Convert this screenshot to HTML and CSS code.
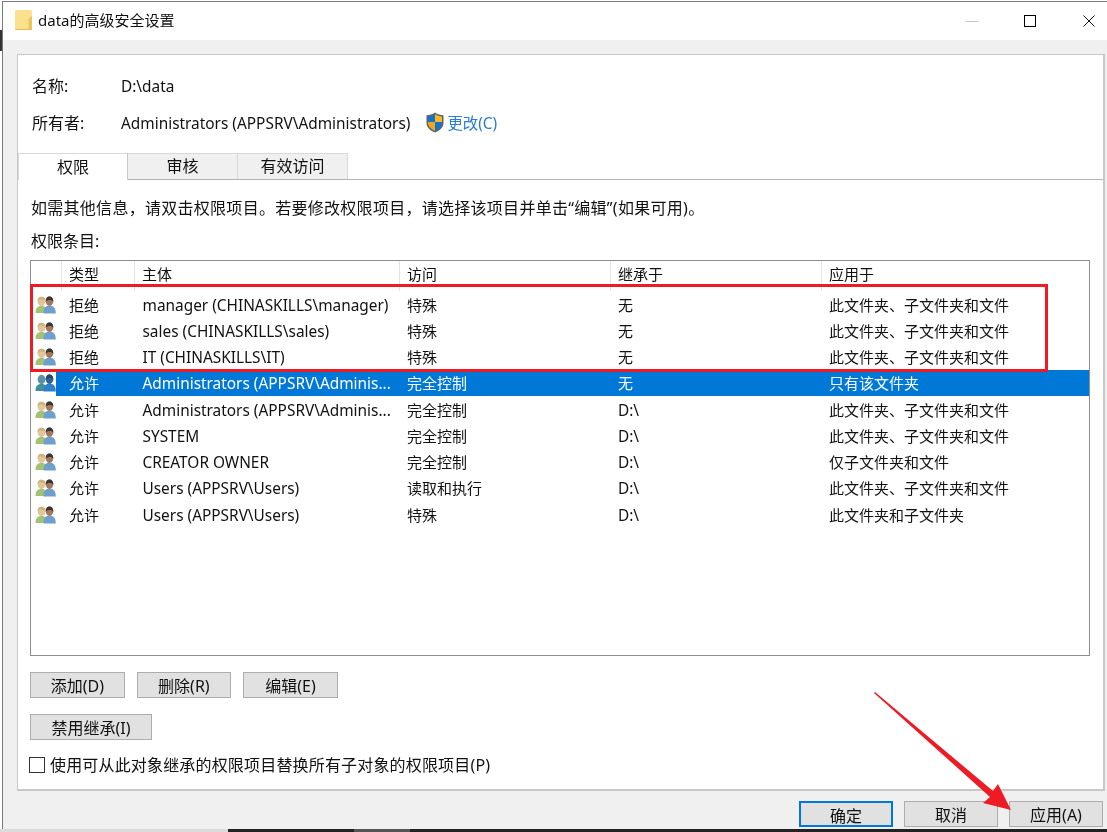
FILE: index.html
```html
<!DOCTYPE html>
<html lang="zh-CN">
<head>
<meta charset="utf-8">
<title>data的高级安全设置</title>
<link rel="stylesheet" href="styles.css">
</head>
<body>
<svg class="defs" width="0" height="0" aria-hidden="true">
  <symbol id="users" viewBox="0 0 21 18">
    <path d="M0.5 17 C0.5 11.5 3 10 6.5 10 C10 10 12 11.5 12 17 Z" fill="#a3c273"/>
    <ellipse cx="6.5" cy="5.5" rx="3.9" ry="4.7" fill="#e0c79a"/>
    <path d="M2.6 5 C2.6 1.8 4.4 .8 6.5 .8 C8.6 .8 10.4 1.8 10.4 4 C8 4.2 5.4 3.4 4.8 3 C4.4 4 3.4 4.8 2.6 5 Z" fill="#cdb27a"/>
    <path d="M8.5 17.5 C8.5 11.5 11 9.5 14.5 9.5 C18 9.5 20.8 11.5 20.8 17.5 Z" fill="#6f9fcc"/>
    <ellipse cx="14.5" cy="5.2" rx="3.8" ry="4.7" fill="#a5785a"/>
    <path d="M10.7 5.5 C10.7 1.6 12.5 .4 14.5 .4 C16.7 .4 18.3 1.8 18.3 5.5 C16.9 3.6 12.9 3.2 10.7 5.5 Z" fill="#37373b"/>
  </symbol>
  <symbol id="users-sel" viewBox="0 0 21 18">
    <path d="M0.5 17 C0.5 11.5 3 10 6.5 10 C10 10 12 11.5 12 17 Z" fill="#3f8f9f"/>
    <ellipse cx="6.5" cy="5.5" rx="3.9" ry="4.7" fill="#5a93a8"/>
    <path d="M8.5 17.5 C8.5 11.5 11 9.5 14.5 9.5 C18 9.5 20.8 11.5 20.8 17.5 Z" fill="#2f7fca"/>
    <ellipse cx="14.5" cy="5.2" rx="3.8" ry="4.7" fill="#2f6390"/>
    <path d="M10.7 5.5 C10.7 1.6 12.5 .4 14.5 .4 C16.7 .4 18.3 1.8 18.3 5.5 C16.9 3.6 12.9 3.2 10.7 5.5 Z" fill="#24466a"/>
  </symbol>
</svg>

<div class="screen">
  <div class="window">
    <header class="titlebar">
      <div class="title">
        <svg class="folder" viewBox="0 0 17 20" width="17" height="20" aria-hidden="true">
          <path d="M0 1.5 Q0 0 1.5 0 H15.5 Q17 0 17 1.5 V20 H1.5 Q0 20 0 18.5 Z" fill="#fbe08e"/>
          <path d="M13.5 20 V9 L17 6 V20 Z" fill="#eec660"/>
          <path d="M0 18.5 Q0 20 1.5 20 H17 V19 H0 Z" fill="#e6bd5a"/>
        </svg>
        <span>data的高级安全设置</span>
      </div>
      <div class="controls">
        <svg viewBox="0 0 12 12" width="12" height="12" class="ctl ctl-min" aria-hidden="true"><path d="M0 6.5H12" stroke="#c4c4c4" fill="none"/></svg>
        <svg viewBox="0 0 12 12" width="12" height="12" class="ctl ctl-max" aria-hidden="true"><rect x=".5" y=".5" width="11" height="11" stroke="#000" fill="none"/></svg>
        <svg viewBox="0 0 12 12" width="12" height="12" class="ctl" aria-hidden="true"><path d="M.5 .5L11.5 11.5M11.5 .5L.5 11.5" stroke="#111" fill="none"/></svg>
      </div>
    </header>

    <div class="body">
      <main class="panel">
        <div class="info">
          <div class="info-row"><span class="info-label">名称:</span><span class="lat">D:\data</span></div>
          <div class="info-row">
            <span class="info-label">所有者:</span>
            <span class="lat">Administrators (APPSRV\Administrators)</span>
            <svg class="shield" viewBox="0 0 18 21" width="18" height="21" aria-hidden="true">
              <path d="M9 .5 C11.5 2.4 14.5 3.2 17.5 3.2 V11 C17.5 15.5 13.5 18.8 9 20.5 C4.5 18.8 .5 15.5 .5 11 V3.2 C3.5 3.2 6.5 2.4 9 .5 Z" fill="#5b6670"/>
              <path d="M9 2 V10 H2 V4.4 C4.6 4.2 7 3.4 9 2 Z" fill="#1673c9"/>
              <path d="M9 2 C11 3.4 13.4 4.2 16 4.4 V10 H9 Z" fill="#f6b91f"/>
              <path d="M2 10 H9 V18.8 C5.2 17.2 2 14.6 2 11 Z" fill="#f0a818"/>
              <path d="M9 10 H16 V11 C16 14.6 12.8 17.2 9 18.8 Z" fill="#1673c9"/>
            </svg>
            <a class="link">更改(C)</a>
          </div>
        </div>

        <nav class="tabs">
          <span class="tab tab-active">权限</span>
          <span class="tab">审核</span>
          <span class="tab">有效访问</span>
        </nav>

        <section class="tab-body">
          <p class="hint">如需其他信息，请双击权限项目。若要修改权限项目，请选择该项目并单击“编辑”(如果可用)。</p>
          <p class="list-title">权限条目:</p>

          <div class="list">
            <div class="row head">
              <span class="cell c-ico"></span><span class="cell">类型</span><span class="cell">主体</span><span class="cell">访问</span><span class="cell">继承于</span><span class="cell">应用于</span>
            </div>
            <div class="row"><span class="cell c-ico"><svg class="u"><use href="#users"/></svg></span><span class="cell">拒绝</span><span class="cell lat">manager (CHINASKILLS\manager)</span><span class="cell">特殊</span><span class="cell">无</span><span class="cell">此文件夹、子文件夹和文件</span></div>
            <div class="row"><span class="cell c-ico"><svg class="u"><use href="#users"/></svg></span><span class="cell">拒绝</span><span class="cell lat">sales (CHINASKILLS\sales)</span><span class="cell">特殊</span><span class="cell">无</span><span class="cell">此文件夹、子文件夹和文件</span></div>
            <div class="row"><span class="cell c-ico"><svg class="u"><use href="#users"/></svg></span><span class="cell">拒绝</span><span class="cell lat">IT (CHINASKILLS\IT)</span><span class="cell">特殊</span><span class="cell">无</span><span class="cell">此文件夹、子文件夹和文件</span></div>
            <div class="row selected"><span class="cell c-ico"><svg class="u"><use href="#users-sel"/></svg></span><span class="cell">允许</span><span class="cell lat">Administrators (APPSRV\Adminis...</span><span class="cell">完全控制</span><span class="cell">无</span><span class="cell">只有该文件夹</span></div>
            <div class="row"><span class="cell c-ico"><svg class="u"><use href="#users"/></svg></span><span class="cell">允许</span><span class="cell lat">Administrators (APPSRV\Adminis...</span><span class="cell">完全控制</span><span class="cell lat">D:\</span><span class="cell">此文件夹、子文件夹和文件</span></div>
            <div class="row"><span class="cell c-ico"><svg class="u"><use href="#users"/></svg></span><span class="cell">允许</span><span class="cell lat">SYSTEM</span><span class="cell">完全控制</span><span class="cell lat">D:\</span><span class="cell">此文件夹、子文件夹和文件</span></div>
            <div class="row"><span class="cell c-ico"><svg class="u"><use href="#users"/></svg></span><span class="cell">允许</span><span class="cell lat">CREATOR OWNER</span><span class="cell">完全控制</span><span class="cell lat">D:\</span><span class="cell">仅子文件夹和文件</span></div>
            <div class="row"><span class="cell c-ico"><svg class="u"><use href="#users"/></svg></span><span class="cell">允许</span><span class="cell lat">Users (APPSRV\Users)</span><span class="cell">读取和执行</span><span class="cell lat">D:\</span><span class="cell">此文件夹、子文件夹和文件</span></div>
            <div class="row"><span class="cell c-ico"><svg class="u"><use href="#users"/></svg></span><span class="cell">允许</span><span class="cell lat">Users (APPSRV\Users)</span><span class="cell">特殊</span><span class="cell lat">D:\</span><span class="cell">此文件夹和子文件夹</span></div>
          </div>

          <div class="btn-row">
            <button class="btn">添加(D)</button>
            <button class="btn">删除(R)</button>
            <button class="btn">编辑(E)</button>
          </div>
          <div class="btn-row-2"><button class="btn btn-wide">禁用继承(I)</button></div>
          <label class="check"><span class="box"></span><span class="check-text">使用可从此对象继承的权限项目替换所有子对象的权限项目(P)</span></label>
        </section>
      </main>

      <footer class="actions">
        <button class="btn btn-main btn-default">确定</button>
        <button class="btn btn-main">取消</button>
        <button class="btn btn-main">应用(A)</button>
      </footer>
    </div>
  </div>
  <div class="taskbar">
    <span class="tb-light"></span><span class="tb-dark"></span><span class="tb-mid"></span><span class="tb-dark tb-rest"></span>
  </div>

  <span class="edge-chunk"></span>
  <span class="highlight"></span>
  <svg class="arrow" viewBox="0 0 1107 832" width="1107" height="832" aria-hidden="true">
    <polygon points="875,692 993,791 998,784 1011,810 983,803 990,797 874,693" fill="#ed1c24"/>
  </svg>
</div>
</body>
</html>
```
FILE: styles.css
```css
* { box-sizing: border-box; }
html, body { margin: 0; padding: 0; }
body {
  background: #fff;
  color: #111;
  font-family: "Noto Sans", "Noto Sans CJK SC", sans-serif;
  font-size: 16px;
}
.lat { font-size: 15.4px; padding-top: 2px; }
.defs { position: absolute; }
.screen {
  position: relative;
  width: 1107px;
  height: 832px;
  overflow: hidden;
  display: flex;
  flex-direction: column;
  padding-top: 1px;
  padding-left: 2px;
}
.window {
  flex: 1;
  min-height: 0;
  display: flex;
  flex-direction: column;
  border-top: 1px solid #7a7a7a;
  border-left: 1px solid #7a7a7a;
  filter: blur(.3px);
}
.titlebar {
  height: 38px;
  flex: none;
  background: #fff;
  display: flex;
  align-items: center;
  justify-content: space-between;
}
.title { display: flex; align-items: center; gap: 6px; padding-left: 12px; margin-bottom: 3px; font-size: 15px; }
.controls { display: flex; align-items: center; padding-right: 12px; }
.ctl-min { margin-right: 46px; }
.ctl-max { margin-right: 47px; }

.body {
  flex: 1;
  min-height: 0;
  display: flex;
  flex-direction: column;
  background: #f0f0f0;
  padding: 14px 0 0 14px;
}
.panel {
  width: 1088px;
  height: 737px;
  flex: none;
  background: #fff;
  border: 1px solid #c8c8c8;
  border-right-width: 2px;
  border-bottom-width: 2px;
  display: flex;
  flex-direction: column;
}
.info { height: 98px; flex: none; padding: 19px 0 0 14px; display: flex; flex-direction: column; gap: 15px; }
.info-row { display: flex; align-items: center; height: 22px; }
.info-label { width: 89px; flex: none; }
.shield { margin-left: 16px; margin-right: 3px; }
.link { color: #2a7bd6; font-size: 15.4px; }

.tabs { display: flex; height: 27px; flex: none; border-bottom: 1px solid #b4b4b4; }
.tab {
  width: 110px;
  height: 26px;
  background: #f0f0f0;
  border: 1px solid #d9d9d9;
  border-bottom: 0;
  border-left: 0;
  padding-bottom: 3px;
  display: flex;
  align-items: center;
  justify-content: center;
}
.tab-active { background: #fff; height: 27px; border-left: 1px solid #d9d9d9; border-right: 1px solid #c8c8c8; }

.tab-body { flex: 1; min-height: 0; padding: 0 0 0 12px; }
.hint { margin: 17px 0 0 1px; height: 22px; line-height: 22px; white-space: nowrap; letter-spacing: .28px; }
.list-title { margin: 11px 0 0 1px; height: 22px; line-height: 22px; }

.list {
  width: 1060px;
  height: 396px;
  margin-top: 8px;
  border: 1px solid #8e8e8e;
  background: #fff;
  font-size: 15px;
}
.row {
  display: grid;
  grid-template-columns: 30px 73px 265px 211px 211px 1fr;
  height: 26.25px;
  align-items: center;
}
.row.head { height: 30px; align-items: start; }
.row.head .cell { border-left: 1px solid #e2e2e2; height: 100%; padding-left: 7px; line-height: 27px; }
.row.head .c-ico { border-left: 0; }
.cell { padding-left: 8px; white-space: nowrap; overflow: hidden; }
.cell:nth-child(3) { padding-left: 8.5px; }
.c-ico { padding-left: 3.5px; padding-top: 1px; display: flex; align-items: center; overflow: visible; }
.u { width: 21px; height: 18px; display: block; }
.selected { background: linear-gradient(to right, transparent 25px, #0078d7 25px); color: #fff; }

.btn {
  font: inherit;
  color: #111;
  background: #e1e1e1;
  border: 1px solid #adadad;
  border-radius: 0;
  padding: 0 0 2px;
  width: 94.6px;
  height: 26px;
}
.btn-row { display: flex; gap: 12px; margin-top: 16px; }
.btn-row-2 { margin-top: 16px; }
.btn-wide { width: 122px; height: 26px; }
.check { display: flex; align-items: center; gap: 5px; margin: 14px 0 0 -1px; height: 22px; }
.check-text { padding-bottom: 2px; letter-spacing: .17px; }
.box { width: 16px; height: 16px; border: 1px solid #333; background: #fff; flex: none; }

.actions { display: flex; justify-content: flex-end; gap: 11px; padding: 10px 4px 0 0; }
.btn-main { width: 94px; height: 26px; }
.btn-default { border: 2px solid #0078d7; }

.taskbar { display: flex; flex: none; height: 3px; margin-left: -2px; }
.tb-light { width: 228px; background: #dcdcdc; }
.tb-dark { width: 126px; background: #222; }
.tb-mid { width: 56px; background: #555; }
.tb-rest { flex: 1; }

.edge-chunk { position: absolute; left: 0; top: 30px; width: 2px; height: 21px; background: #333; }
.highlight { position: absolute; left: 30px; top: 284px; width: 1018px; height: 88px; border: 3px solid #ed1c24; pointer-events: none; }
.arrow { position: absolute; left: 0; top: 0; pointer-events: none; }
```
